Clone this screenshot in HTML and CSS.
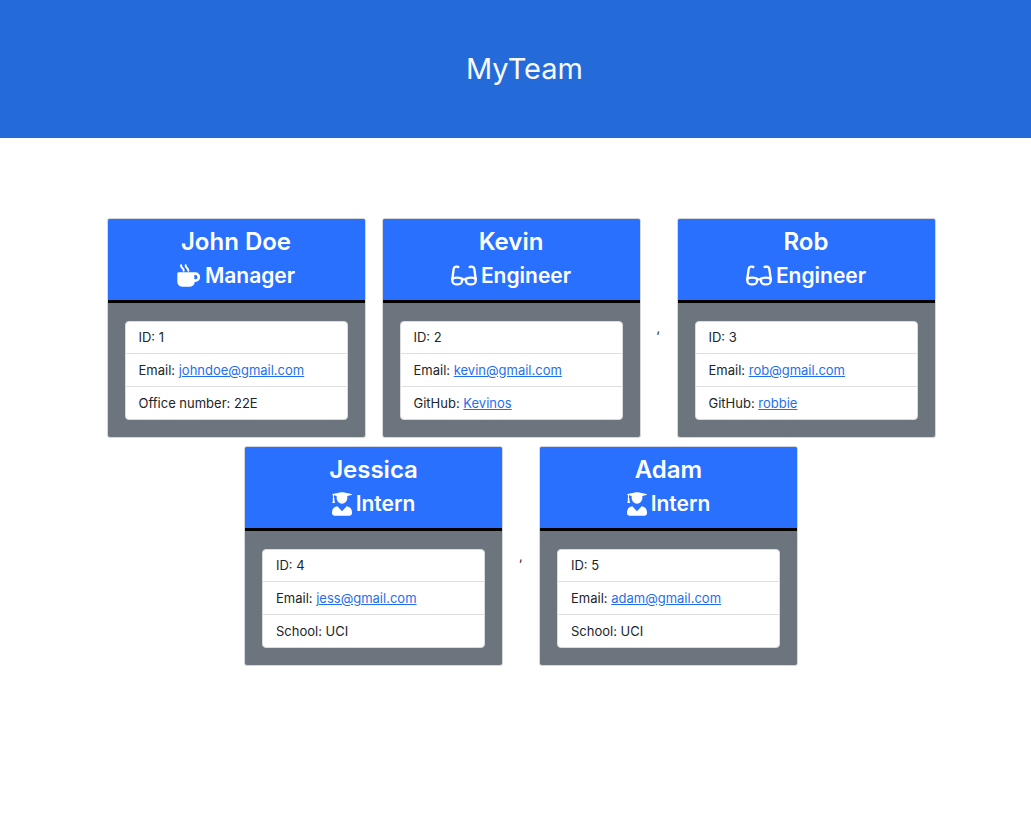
FILE: index.html
```html
<!DOCTYPE html>
<html lang="en">
<head>
<meta charset="utf-8">
<meta name="viewport" content="width=device-width, initial-scale=1">
<title>MyTeam</title>
<link rel="stylesheet" href="styles.css">
</head>
<body>
<svg class="sprite" aria-hidden="true">
  <symbol id="mug" viewBox="24 24 72 72">
    <path d="M36 28q0 5 4 8t4 8M50 28q0 5 4 8t4 8" fill="none" stroke="currentColor" stroke-width="6" stroke-linecap="round"/>
    <path fill="currentColor" fill-rule="evenodd" d="M29 49H79a14.500 14.500 0 0 1 0 29H77a14 14 0 0 1-14 14H39a14 14 0 0 1-14-14V53a4 4 0 0 1 4-4ZM76 57V70H79a6.500 6.500 0 0 0 0-13Z"/>
  </symbol>
  <symbol id="glasses" viewBox="21 24 78 72">
    <g fill="none" stroke="currentColor" stroke-width="7" stroke-linecap="round" stroke-linejoin="round">
      <path d="M25 69L29 39q2-8 10-7l4 1M95 69L91 39q-2-8-10-7l-4 1"/>
      <path d="M25 68q14-6 29 0v6a11 11 0 0 1-11 11h-7a11 11 0 0 1-11-11ZM66 68q15-6 29 0v6a11 11 0 0 1-11 11h-7a11 11 0 0 1-11-11ZM54 70h12"/>
    </g>
  </symbol>
  <symbol id="graduate" viewBox="22 18 60 70">
    <path fill="currentColor" d="M24 23L49 18q3-.5 6 0L80 23q4 1.500 0 3L68 29v7a16 16 0 0 1-32 0v-7l-8-2v8q3 2 1 5l2 10h-8l2-10q-2-3 0-5v-8q-4-2-1-4Z"/>
    <path fill="currentColor" d="M38 60L52 75L66 60Q81 62 82 77V81q0 7-7 7H29q-7 0-7-7V77Q23 62 38 60Z"/>
  </symbol>
</svg>
<header class="banner">
  <h1 class="banner-title">MyTeam</h1>
</header>
<main class="team">
  <article class="card">
    <header class="card-header">
      <h2 class="name">John Doe</h2>
      <h3 class="role"><svg class="icon icon-mug" aria-hidden="true"><use href="#mug"/></svg>Manager</h3>
    </header>
    <div class="card-body">
      <ul class="details">
        <li>ID: 1</li>
        <li>Email: <a href="mailto:johndoe@gmail.com">johndoe@gmail.com</a></li>
        <li>Office number: 22E</li>
      </ul>
    </div>
  </article>
  <article class="card">
    <header class="card-header">
      <h2 class="name">Kevin</h2>
      <h3 class="role"><svg class="icon icon-glasses" aria-hidden="true"><use href="#glasses"/></svg>Engineer</h3>
    </header>
    <div class="card-body">
      <ul class="details">
        <li>ID: 2</li>
        <li>Email: <a href="mailto:kevin@gmail.com">kevin@gmail.com</a></li>
        <li>GitHub: <a href="https://github.com/Kevinos">Kevinos</a></li>
      </ul>
    </div>
  </article>
  <span class="separator">,</span>
  <article class="card">
    <header class="card-header">
      <h2 class="name">Rob</h2>
      <h3 class="role"><svg class="icon icon-glasses" aria-hidden="true"><use href="#glasses"/></svg>Engineer</h3>
    </header>
    <div class="card-body">
      <ul class="details">
        <li>ID: 3</li>
        <li>Email: <a href="mailto:rob@gmail.com">rob@gmail.com</a></li>
        <li>GitHub: <a href="https://github.com/robbie">robbie</a></li>
      </ul>
    </div>
  </article>
  <article class="card">
    <header class="card-header">
      <h2 class="name">Jessica</h2>
      <h3 class="role"><svg class="icon icon-graduate" aria-hidden="true"><use href="#graduate"/></svg>Intern</h3>
    </header>
    <div class="card-body">
      <ul class="details">
        <li>ID: 4</li>
        <li>Email: <a href="mailto:jess@gmail.com">jess@gmail.com</a></li>
        <li>School: UCI</li>
      </ul>
    </div>
  </article>
  <span class="separator">,</span>
  <article class="card">
    <header class="card-header">
      <h2 class="name">Adam</h2>
      <h3 class="role"><svg class="icon icon-graduate" aria-hidden="true"><use href="#graduate"/></svg>Intern</h3>
    </header>
    <div class="card-body">
      <ul class="details">
        <li>ID: 5</li>
        <li>Email: <a href="mailto:adam@gmail.com">adam@gmail.com</a></li>
        <li>School: UCI</li>
      </ul>
    </div>
  </article>
</main>
</body>
</html>
```
FILE: styles.css
```css
* {
  box-sizing: border-box;
}

body {
  margin: 0;
  background: #fff;
  color: #212529;
  font-family: Inter, "Liberation Sans", sans-serif;
  font-size: 13px;
  line-height: 20px;
}

.sprite {
  display: none;
}

.banner {
  padding: 48px 0 48px 18px;
  background: #246bd9;
  color: #f8f9fa;
  text-align: center;
}

.banner-title {
  margin: 0;
  font-size: 29px;
  font-weight: 400;
  line-height: 42px;
}

.team {
  display: flex;
  flex-wrap: wrap;
  justify-content: center;
  align-items: center;
  gap: 8px 16px;
  padding: 80px 48px 80px 59px;
}

.card {
  width: 259px;
  border: 1px solid #d5d7da;
  border-radius: 3px;
  background: #6c757d;
  overflow: hidden;
}

.card-header {
  padding: 6px 16px 7px;
  border-bottom: 3px solid #000;
  background: #2970ff;
  color: #fff;
}

.name,
.role {
  margin: 0;
  font-weight: 600;
  text-align: center;
}

.name {
  font-size: 24px;
  line-height: 34px;
}

.role {
  display: flex;
  justify-content: center;
  align-items: center;
  gap: 4px;
  font-size: 21px;
  line-height: 34px;
}

.icon {
  height: 24px;
}

.icon-mug {
  width: 24px;
}

.icon-glasses {
  width: 26px;
}

.icon-graduate {
  width: 20px;
}

.card-body {
  padding: 18px 17px 17px;
}

.details {
  margin: 0;
  padding: 0;
  border: 1px solid #d9dbdd;
  border-radius: 4px;
  background: #fff;
  list-style: none;
}

.details li {
  padding: 6px 13px;
}

.details li:first-child {
  padding-top: 5px;
}

.details li + li {
  border-top: 1px solid #dfdfdf;
}

.details a {
  color: #1f6fee;
  text-decoration: underline;
}

.separator {
  width: 4px;
}
```
